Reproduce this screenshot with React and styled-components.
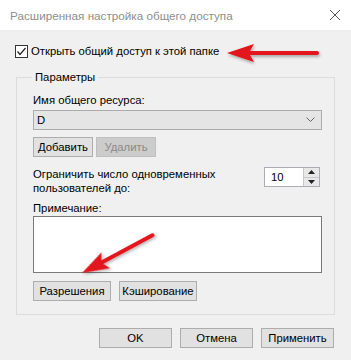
import React from 'react';
import styled, { createGlobalStyle } from 'styled-components';

const GlobalStyle = createGlobalStyle`
  html, body {
    margin: 0;
    padding: 0;
    background: #f0f0f0;
  }
  * { box-sizing: border-box; }
`;

const Window = styled.div`
  position: relative;
  width: 351px;
  height: 360px;
  background: #f0f0f0;
  font-family: 'Liberation Sans', Arial, sans-serif;
  font-size: 11.3px;
  color: #000;
  overflow: hidden;
`;

const TitleBar = styled.div`
  height: 30px;
  background: #fff;
  display: flex;
  align-items: center;
  justify-content: space-between;
  padding: 0 9px 0 10px;
`;

const Title = styled.div`
  color: #8e8e8e;
  font-size: 11.7px;
`;

const CloseButton = styled.div`
  width: 14px;
  height: 14px;
  display: flex;
  align-items: center;
  justify-content: center;
`;

const Body = styled.div`
  padding: 15px 0 0 0;
`;

const CheckRow = styled.label`
  display: flex;
  align-items: center;
  height: 13px;
  padding-left: 15px;
  gap: 3px;
  line-height: 13px;
`;

const CheckBox = styled.span`
  width: 13px;
  height: 13px;
  border: 1px solid #333;
  background: #fff;
  display: flex;
  align-items: center;
  justify-content: center;
`;

const Group = styled.fieldset`
  margin: 11px 16px 0 16px;
  padding: 7px 12px 13px 16px;
  border: 1px solid #dcdcdc;
  min-width: 0;
`;

const Legend = styled.legend`
  padding: 0 3px;
  margin-left: -1px;
  line-height: 16px;
`;

const FieldLabel = styled.div`
  line-height: ${p => p.$lh || 16}px;
  margin-top: ${p => p.$mt || 0}px;
`;

const Select = styled.div`
  margin-top: 2px;
  height: 20px;
  background: #e5e5e5;
  border: 1px solid #acacac;
  display: flex;
  align-items: center;
  justify-content: space-between;
  padding: 0 6px 0 3px;
`;

const ButtonRow = styled.div`
  display: flex;
  gap: ${p => p.$gap || 3}px;
  margin-top: ${p => p.$mt || 0}px;
  justify-content: ${p => (p.$end ? 'flex-end' : 'flex-start')};
  padding-right: ${p => p.$pr || 0}px;
`;

const Button = styled.button`
  width: ${p => p.$w || 60}px;
  height: 20px;
  padding: 0;
  font-family: inherit;
  font-size: 11.3px;
  background: ${p => (p.disabled ? '#cccccc' : '#e1e1e1')};
  color: ${p => (p.disabled ? '#8a8a8a' : '#000')};
  border: 1px solid ${p => (p.disabled ? '#bfbfbf' : '#adadad')};
  border-radius: 0;
`;

const LimitRow = styled.div`
  display: flex;
  justify-content: space-between;
  align-items: flex-start;
  margin-top: 10px;
`;

const LimitText = styled.div`
  line-height: 13.5px;
  padding-top: 1px;
`;

const Spin = styled.div`
  width: 56px;
  height: 20px;
  background: #fff;
  border: 1px solid #abadb3;
  display: flex;
  margin-right: 2px;
`;

const SpinValue = styled.div`
  flex: 1;
  padding-left: 6px;
  line-height: 18px;
`;

const SpinButtons = styled.div`
  width: 16px;
  display: flex;
  flex-direction: column;
  border-left: 1px solid #c8c8c8;
`;

const SpinHalf = styled.div`
  flex: 1;
  background: #e8e8e8;
  border-top: ${p => (p.$bottom ? '1px solid #c8c8c8' : 'none')};
  display: flex;
  align-items: center;
  justify-content: center;
`;

const TextArea = styled.div`
  height: 57px;
  background: #fff;
  border: 1px solid #7a7a7a;
`;

const Overlay = styled.svg`
  position: absolute;
  left: 0;
  top: 0;
  pointer-events: none;
`;

const arrowPoints = (len) =>
  `0,0 27,-9 23,-2 ${len},-2 ${len},2 23,2 27,9`;

const RedArrow = ({ x, y, angle, len }) => (
  <g transform={`translate(${x} ${y}) rotate(${angle})`} filter="url(#shadow)">
    <polygon points={arrowPoints(len)} fill="#e2131b" />
    <circle cx={len} cy={0} r={2} fill="#e2131b" />
  </g>
);

export default function App() {
  return (
    <Window>
      <GlobalStyle />
      <TitleBar>
        <Title>Расширенная настройка общего доступа</Title>
        <CloseButton>
          <svg width="12" height="12" viewBox="0 0 12 12">
            <path d="M1 1L11 11M11 1L1 11" stroke="#555" strokeWidth="1" />
          </svg>
        </CloseButton>
      </TitleBar>
      <Body>
        <CheckRow>
          <CheckBox>
            <svg width="11" height="11" viewBox="0 0 11 11">
              <path d="M1.5 5.5L4 8.5L9.5 2" stroke="#222" strokeWidth="1.2" fill="none" />
            </svg>
          </CheckBox>
          Открыть общий доступ к этой папке
        </CheckRow>

        <Group>
          <Legend>Параметры</Legend>
          <FieldLabel>Имя общего ресурса:</FieldLabel>
          <Select>
            <span>D</span>
            <svg width="9" height="6" viewBox="0 0 9 6">
              <path d="M0.5 0.5L4.5 4.5L8.5 0.5" stroke="#666" strokeWidth="1" fill="none" />
            </svg>
          </Select>
          <ButtonRow $mt={7}>
            <Button>Добавить</Button>
            <Button disabled>Удалить</Button>
          </ButtonRow>
          <LimitRow>
            <LimitText>
              Ограничить число одновременных
              <br />
              пользователей до:
            </LimitText>
            <Spin>
              <SpinValue>10</SpinValue>
              <SpinButtons>
                <SpinHalf>
                  <svg width="7" height="4" viewBox="0 0 7 4">
                    <path d="M0 4L3.5 0L7 4Z" fill="#222" />
                  </svg>
                </SpinHalf>
                <SpinHalf $bottom>
                  <svg width="7" height="4" viewBox="0 0 7 4">
                    <path d="M0 0L3.5 4L7 0Z" fill="#222" />
                  </svg>
                </SpinHalf>
              </SpinButtons>
            </Spin>
          </LimitRow>
          <FieldLabel $mt={6} $lh={15}>Примечание:</FieldLabel>
          <TextArea />
          <ButtonRow $mt={8} $gap={8}>
            <Button $w={78}>Разрешения</Button>
            <Button $w={78}>Кэширование</Button>
          </ButtonRow>
        </Group>

        <ButtonRow $mt={13} $gap={8} $end $pr={17}>
          <Button $w={73}>OK</Button>
          <Button $w={73}>Отмена</Button>
          <Button $w={73}>Применить</Button>
        </ButtonRow>
      </Body>

      <Overlay width="351" height="360" viewBox="0 0 351 360">
        <defs>
          <filter id="shadow" x="-20%" y="-50%" width="140%" height="200%">
            <feDropShadow dx="1" dy="2" stdDeviation="1.5" floodColor="#000" floodOpacity="0.3" />
          </filter>
        </defs>
        <RedArrow x={227} y={53} angle={0} len={90} />
        <RedArrow x={82} y={273} angle={-28.2} len={80} />
      </Overlay>
    </Window>
  );
}
